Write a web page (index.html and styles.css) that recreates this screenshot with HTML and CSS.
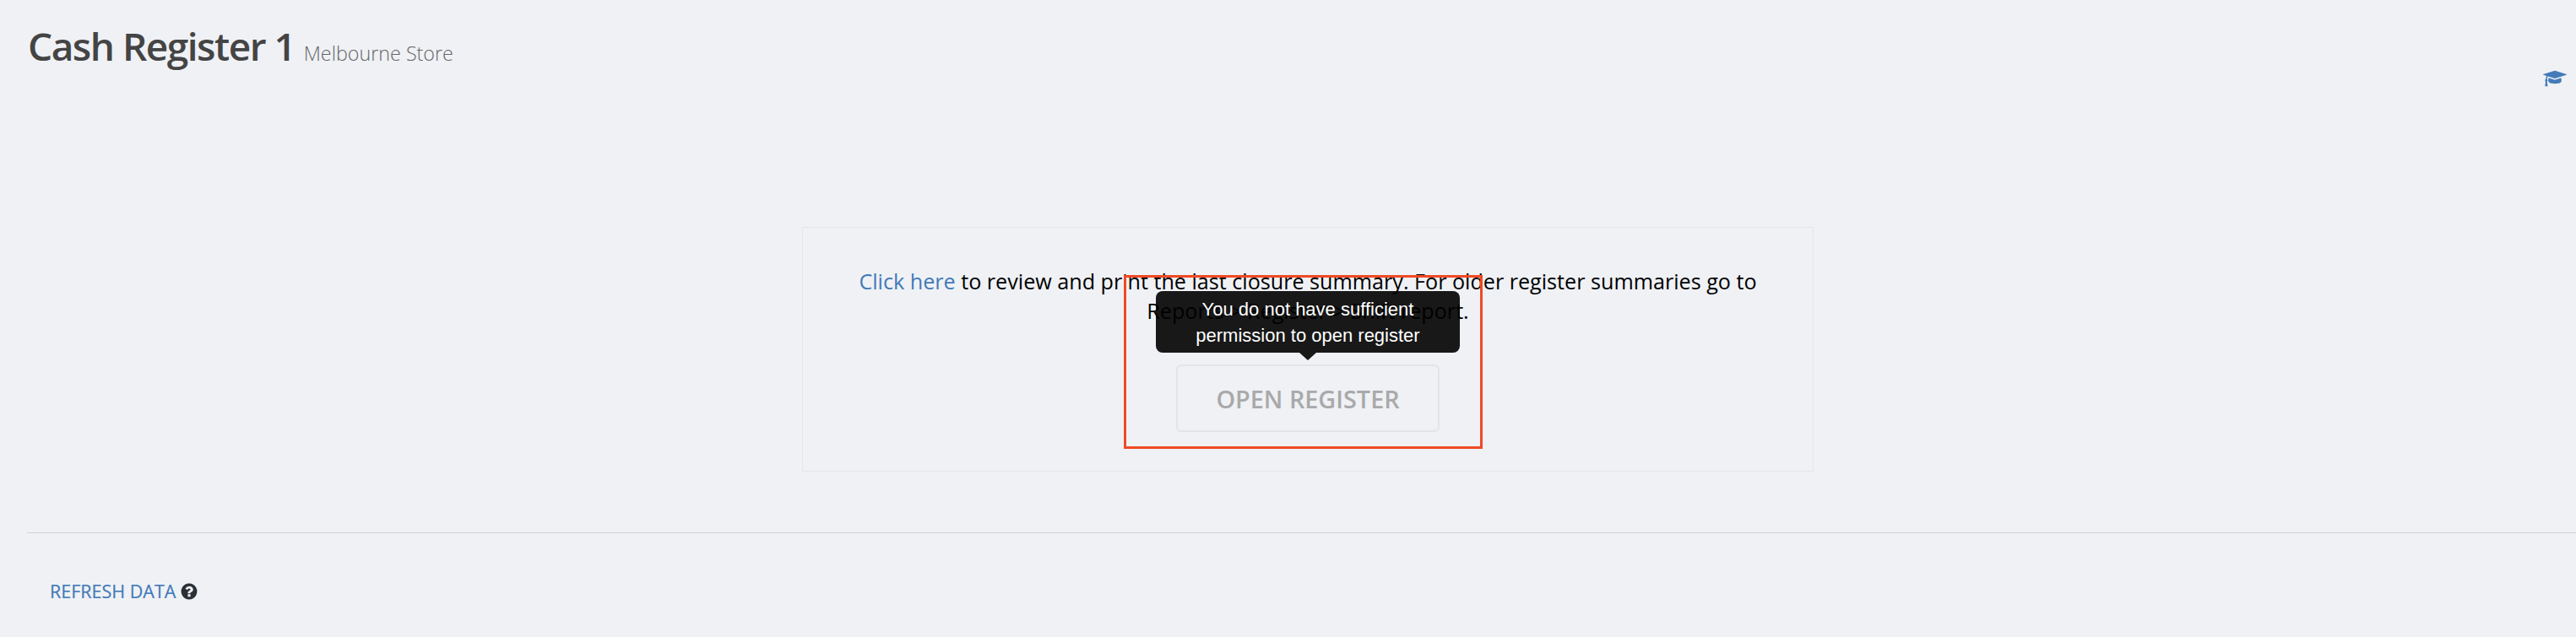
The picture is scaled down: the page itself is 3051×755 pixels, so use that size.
FILE: index.html
```html
<!DOCTYPE html>
<html lang="en">
<head>
  <meta charset="UTF-8">
  <title>Cash Register 1</title>
  <link rel="stylesheet" href="styles.css">
</head>
<body>
  <header class="page-head">
    <h1>Cash Register 1 <small>Melbourne Store</small></h1>
    <a class="help-cap" href="#">
      <svg viewBox="0 0 2304 1792" width="28" height="22"><path fill="currentColor" d="M1774 836l18 316q4 69-82 128t-235 93.500-323 34.500-323-34.500-235-93.500-82-128l18-316 574 181q22 7 48 7t48-7zm530-324q0 23-22 31l-1120 352q-4 1-10 1t-10-1l-652-206q-43 34-71 111.500t-34 178.500q63 36 63 109 0 69-58 107l58 433q2 14-8 25-9 11-24 11h-192q-15 0-24-11-10-11-8-25l58-433q-58-38-58-107 0-73 65-111 11-207 98-330l-333-104q-22-8-22-31t22-31l1120-352q4-1 10-1t10 1l1120 352q22 8 22 31z"/></svg>
    </a>
  </header>

  <main class="content">
    <section class="card">
      <p><a href="#">Click here</a> to review and print the last closure summary. For older register summaries go to<br>Reports &gt; Register &gt; Shift report.</p>
      <div class="action">
        <button class="btn-open" disabled>OPEN REGISTER</button>
        <div class="tooltip">You do not have sufficient<br>permission to open register</div>
        <div class="highlight"></div>
      </div>
    </section>
  </main>

  <footer class="page-foot">
    <a href="#">REFRESH DATA</a>
    <svg viewBox="0 0 1792 1792" width="22" height="22"><path fill="#2b3036" d="M1024 1376v-192q0-14-9-23t-23-9h-192q-14 0-23 9t-9 23v192q0 14 9 23t23 9h192q14 0 23-9t9-23zm256-672q0-88-55.500-163t-138.500-116-170-41q-243 0-371 213-15 24 8 42l132 100q7 6 19 6 16 0 25-12 53-68 86-92 34-24 86-24 48 0 85.500 26t37.500 59q0 38-20 61t-68 45q-63 28-115.500 86.500t-52.500 125.500v36q0 14 9 23t23 9h192q14 0 23-9t9-23q0-19 21.500-49.500t54.500-49.500q32-18 49-28.500t46-35 44.500-48 28-60.500 12.500-81zm384 192q0 209-103 385.500t-279.500 279.500-385.500 103-385.500-103-279.500-279.500-103-385.500 103-385.500 279.500-279.500 385.500-103 385.500 103 279.500 279.500 103 385.500z"/></svg>
  </footer>
</body>
</html>
```

FILE: styles.css
```css
body {
  margin: 0;
  background-color: #eff1f5;
  font-family: "Open Sans", sans-serif;
  color: #000;
}
a {
  color: #437ab8;
  text-decoration: none;
}
.page-head {
  display: flex;
  justify-content: space-between;
  height: 269px;
  padding: 24px 11px 0 33px;
  box-sizing: border-box;
}
h1 {
  margin: 0;
  font-size: 46px;
  line-height: 60px;
  font-weight: 600;
  letter-spacing: -1.5px;
  color: #444;
}
h1 small {
  margin-left: 0;
  font-size: 23.3px;
  font-weight: 300;
  letter-spacing: 0;
  color: #666;
}
.help-cap {
  margin-top: 58px;
  height: 22px;
}
.content {
  display: flex;
  justify-content: center;
  padding-left: 47px;
}
.card {
  width: 1198px;
  box-sizing: border-box;
  padding: 46px;
  border: 1px solid #e4e6ea;
  text-align: center;
}
.card p {
  margin: 0 0 46px;
  font-size: 25.15px;
  line-height: 35px;
}
.action {
  position: relative;
  width: 312px;
  margin: 0 auto;
}
.btn-open {
  display: block;
  width: 312px;
  height: 80px;
  padding: 0;
  background: transparent;
  border: 2px solid #e2e4e8;
  border-radius: 6px;
  font-family: "Open Sans", sans-serif;
  font-size: 28.8px;
  font-weight: 600;
  color: #a9a9a9;
}
.tooltip {
  position: absolute;
  left: -24px;
  top: -87px;
  width: 360px;
  height: 73px;
  box-sizing: border-box;
  padding-top: 6px;
  background: rgba(0, 0, 0, 0.9);
  border-radius: 8px;
  font-family: "Liberation Sans", sans-serif;
  font-size: 22px;
  line-height: 31px;
  color: #fff;
}
.tooltip::after {
  content: "";
  position: absolute;
  left: 170px;
  top: 73px;
  border-style: solid;
  border-width: 9px 10px 0;
  border-color: rgba(0, 0, 0, 0.9) transparent transparent;
}
.highlight {
  position: absolute;
  left: -62px;
  top: -106px;
  width: 425px;
  height: 206px;
  box-sizing: border-box;
  border: 3px solid #f04a25;
}
.page-foot {
  display: flex;
  align-items: center;
  gap: 5px;
  margin: 72px 0 0 32px;
  padding: 57px 0 0 27px;
  border-top: 1px solid #cfd1d6;
  font-size: 21.5px;
  line-height: 24px;
  -webkit-text-stroke: 0.2px #437ab8;
}
```
